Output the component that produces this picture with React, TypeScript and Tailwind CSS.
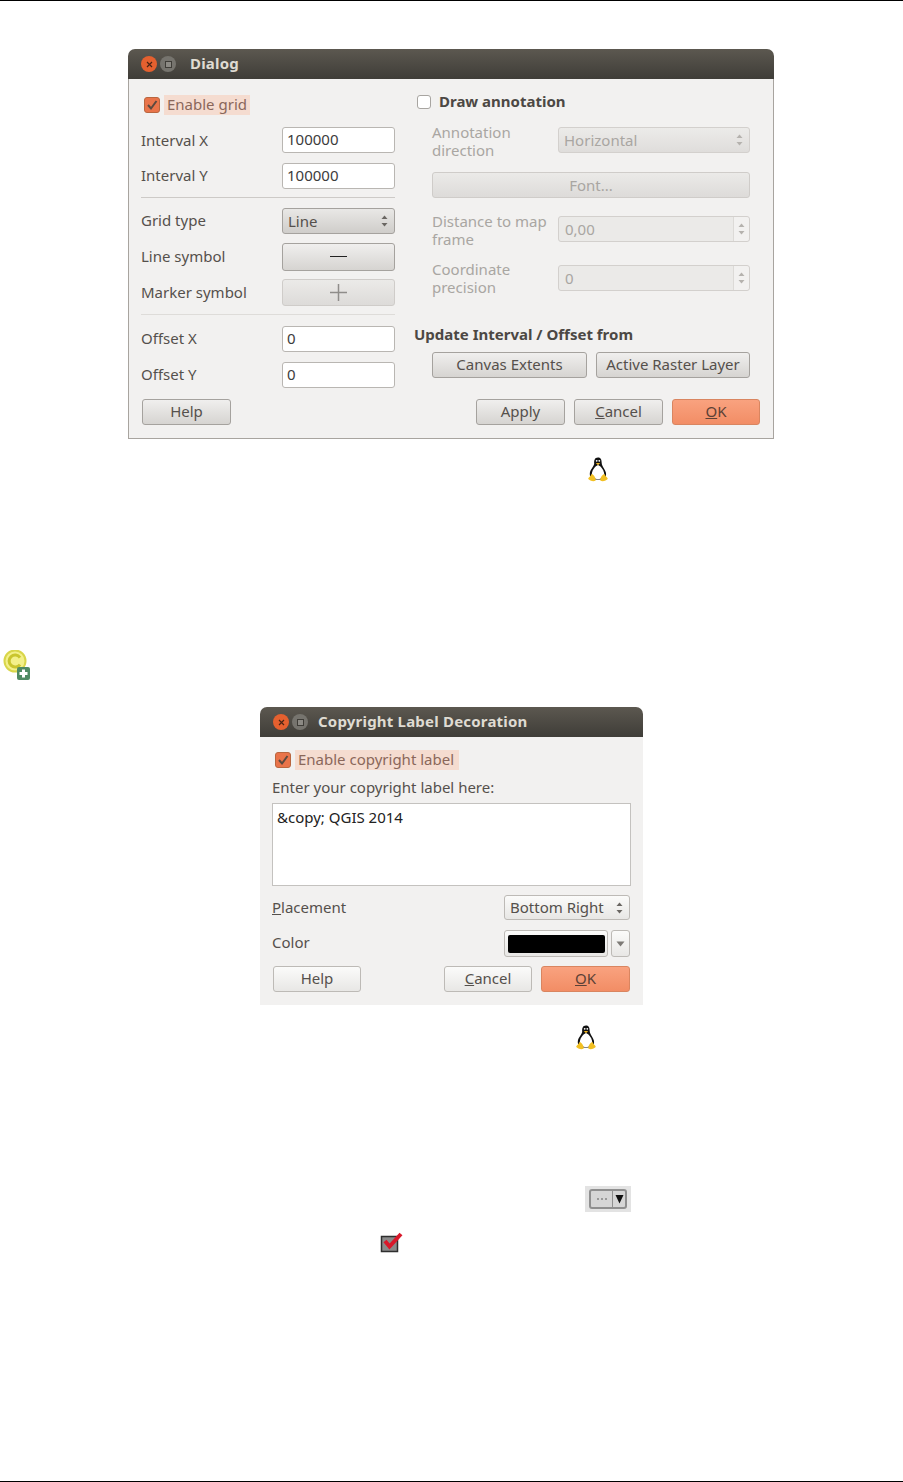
import type { ReactNode } from "react";

function Arrows({ dim }: { dim?: boolean }) {
  const fill = dim ? "#b5b2ae" : "#6a6662";
  return (
    <svg width="7" height="12" viewBox="0 0 7 12" className="shrink-0">
      <path d="M3.5 0.5 L6.5 4 H0.5 Z" fill={fill} />
      <path d="M0.5 8 H6.5 L3.5 11.5 Z" fill={fill} />
    </svg>
  );
}

function TitleBar({ title, gap }: { title: string; gap: string }) {
  return (
    <div className="h-[30px] flex items-center pl-[13px] rounded-t-[7px] bg-gradient-to-b from-[#5c5850] to-[#3f3d38]">
      <div className="w-[16px] h-[16px] rounded-full bg-[#e4602f] flex items-center justify-center">
        <svg width="7" height="7" viewBox="0 0 7 7">
          <path d="M1 1 L6 6 M6 1 L1 6" stroke="#4a2414" strokeWidth="1.2" />
        </svg>
      </div>
      <div className="w-[16px] h-[16px] ml-[3px] rounded-full bg-[#76746e] flex items-center justify-center">
        <div className="w-[7px] h-[7px] border border-[#3f3d38] bg-[#8c8a84]" />
      </div>
      <div className={`${gap} pb-[2px] text-[15px] font-bold tracking-[0.2px] text-[#dfdbd2]`}>{title}</div>
    </div>
  );
}

function Check({ label, bgWidth }: { label: string; bgWidth: string }) {
  return (
    <div className="flex items-center h-[20px]">
      <div className="w-[16px] h-[16px] rounded-[3px] bg-[#e9744a] border border-[#b9663f] flex items-center justify-center">
        <svg width="12" height="12" viewBox="0 0 12 12">
          <path d="M2 6 L5 9.5 L10.5 2" stroke="#5b4a40" strokeWidth="2" fill="none" />
        </svg>
      </div>
      <div className={`${bgWidth} ml-[4px] h-[20px] pl-[3px] bg-[#f5dcd0] text-[#8a675a] leading-[19px]`}>{label}</div>
    </div>
  );
}

function Input({ value }: { value: string }) {
  return (
    <div className="w-[113px] h-[26px] pl-[4px] rounded-[3px] bg-white border border-[#b9b6b2] text-[#3c3c3c] leading-[23px]">
      {value}
    </div>
  );
}

function Btn({ children, w, h = "h-[26px]", dim, ok, light }: { children: ReactNode; w: string; h?: string; dim?: boolean; ok?: boolean; light?: boolean }) {
  let look = "pb-[2px] bg-gradient-to-b from-[#f0efee] to-[#d6d4d1] border-[#a5a29e] text-[#55504c]";
  if (dim) look = "bg-gradient-to-b from-[#ebeae8] to-[#dddbd9] border-[#cfccc9] text-[#a9a6a2]";
  if (light) look = "pb-[2px] bg-gradient-to-b from-[#fbfbfa] to-[#e8e7e5] border-[#bdbab6] text-[#55504c]";
  if (ok) look = "pb-[2px] bg-gradient-to-b from-[#f9a27f] to-[#f28d65] border-[#d98560] text-[#5c4136]";
  return <div className={`${w} ${h} ${look} shrink-0 rounded-[3px] border flex items-center justify-center`}>{children}</div>;
}

function Row({ label, children, mt, flat }: { label: string; children: ReactNode; mt: string; flat?: boolean }) {
  return (
    <div className={`${mt} flex items-center justify-between text-[#55504c]`}>
      <span className={flat ? "" : "pb-[2px]"}>{label}</span>
      {children}
    </div>
  );
}

function Spin({ value }: { value: string }) {
  return (
    <div className="w-[192px] h-[26px] flex rounded-[3px] bg-[#ebeae8] border border-[#d3d0cd] text-[#a9a6a2]">
      <div className="flex-1 pl-[6px] leading-[24px]">{value}</div>
      <div className="w-[16px] border-l border-[#dcdad7] bg-[#f2f1f0] flex items-center justify-center rounded-r-[3px]">
        <Arrows dim />
      </div>
    </div>
  );
}

function DimRow({ lines, mt, down, children }: { lines: string[]; mt: string; down?: boolean; children: ReactNode }) {
  return (
    <div className={`${mt} flex items-center justify-between pl-[18px] h-[26px] text-[#a9a6a2]`}>
      <div className={down ? "pt-[2px] leading-[18px]" : "leading-[18px]"}>
        {lines.map((l) => (
          <div key={l}>{l}</div>
        ))}
      </div>
      {children}
    </div>
  );
}

function Tux() {
  return (
    <svg width="20" height="25" viewBox="0 0 20 25">
      <path d="M10 0.5 C6.6 0.5 6 3.5 6.2 6.5 C6.3 9 2 12.5 1.8 16.5 C1.7 19 3 22 5 22.5 L15 22.5 C17.5 21.5 18.4 18.5 18 16 C17.4 12.5 13.8 9.5 13.7 6 C13.6 3 13.2 0.5 10 0.5 Z" fill="#111" />
      <path d="M10 8 C6.5 9.5 3.8 14 3.8 17.3 C3.8 20.5 6.5 22 10 22 C13.5 22 16.2 20.5 16.2 17.3 C16.2 14 13.5 9.5 10 8 Z" fill="#fff" />
      <path d="M7.8 6 H12.2 L10 8.2 Z" fill="#eeb420" />
      <circle cx="8.7" cy="3.8" r="0.9" fill="#fff" />
      <circle cx="11.3" cy="3.8" r="0.9" fill="#fff" />
      <path d="M3.5 17 C2.5 20 0 20.5 0.3 22 C1.5 23.5 5 25 7.5 23.8 C8.2 21.5 6 17.5 3.5 17 Z" fill="#f2c023" />
      <path d="M16.5 17 C17.5 20 20 20.5 19.7 22 C18.5 23.5 15 25 12.5 23.8 C11.8 21.5 14 17.5 16.5 17 Z" fill="#f2c023" />
    </svg>
  );
}

function CopyrightPlus() {
  return (
    <svg width="28" height="30" viewBox="0 0 28 30">
      <circle cx="12" cy="11" r="10.5" fill="#f3f08a" stroke="#d9d64a" strokeWidth="2" />
      <path d="M17 7.5 A6 6 0 1 0 17 14.5" fill="none" stroke="#c9c52e" strokeWidth="3" />
      <rect x="14" y="17" width="13" height="13" rx="2" fill="#4f8a63" />
      <path d="M20.5 19.5 V27.5 M16.5 23.5 H24.5" stroke="#fff" strokeWidth="3" />
    </svg>
  );
}

function ToolButton() {
  return (
    <div className="ml-[585px] mt-[136px] w-[46px] h-[26px] bg-[#e3e3e3] flex items-center pl-[4px]">
      <div className="w-[38px] h-[20px] flex border-2 border-[#8f8f8f] rounded-[3px] bg-[#d6d6d6]">
        <div className="flex-1 flex items-center justify-center gap-[2px]">
          <span className="w-[2px] h-[2px] bg-[#9a9a9a]" />
          <span className="w-[2px] h-[2px] bg-[#9a9a9a]" />
          <span className="w-[2px] h-[2px] bg-[#9a9a9a]" />
        </div>
        <div className="w-[13px] border-l border-[#8f8f8f] flex items-center justify-center">
          <svg width="9" height="10" viewBox="0 0 9 10">
            <path d="M0.5 1 H8.5 L4.5 9.5 Z" fill="#111" />
          </svg>
        </div>
      </div>
    </div>
  );
}

function RedCheck() {
  return (
    <svg width="23" height="22" viewBox="0 0 23 22" className="ml-[380px] mt-[19px]">
      <rect x="1.5" y="5.5" width="16" height="15" fill="#8a8a8a" stroke="#2e2e2e" strokeWidth="1.5" />
      <path d="M5 10 L9.5 15.5 L21 3" fill="none" stroke="#d9182a" strokeWidth="4" />
    </svg>
  );
}

function GridDialog() {
  return (
    <div className="mt-[48px] ml-[128px] w-[646px] h-[390px]">
      <TitleBar title="Dialog" gap="ml-[14px]" />
      <div className="h-[360px] bg-[#f2f1f0] border border-t-0 border-[#a8a49f] px-[12px] pt-[16px]">
        <div className="flex h-[293px]">
          <div className="w-[254px] shrink-0">
            <div className="ml-[3px]">
              <Check label="Enable grid" bgWidth="w-[86px]" />
            </div>
            <Row label="Interval X" mt="mt-[12px]" flat><Input value="100000" /></Row>
            <Row label="Interval Y" mt="mt-[10px]"><Input value="100000" /></Row>
            <div className="mt-[8px] h-px bg-[#cdcac7]" />
            <Row label="Grid type" mt="mt-[10px]">
              <div className="w-[113px] h-[26px] pl-[5px] pr-[6px] rounded-[3px] border border-[#a5a29e] bg-gradient-to-b from-[#e9e8e6] to-[#cfcdca] flex items-center justify-between">
                Line
                <Arrows />
              </div>
            </Row>
            <Row label="Line symbol" mt="mt-[9px]">
              <Btn w="w-[113px]" h="h-[28px]"><span className="w-[17px] h-px bg-[#222]" /></Btn>
            </Row>
            <Row label="Marker symbol" mt="mt-[8px]" flat>
              <Btn w="w-[113px]" h="h-[27px]" dim>
                <svg width="17" height="17" viewBox="0 0 17 17">
                  <path d="M8.5 0 V17 M0 8.5 H17" stroke="#8f8d8a" strokeWidth="1.5" />
                </svg>
              </Btn>
            </Row>
            <div className="mt-[8px] h-px bg-[#dedcd9]" />
            <Row label="Offset X" mt="mt-[11px]"><Input value="0" /></Row>
            <Row label="Offset Y" mt="mt-[10px]"><Input value="0" /></Row>
          </div>
          <div className="ml-[19px] w-[336px] shrink-0">
            <div className="flex items-center h-[14px] ml-[3px]">
              <div className="w-[14px] h-[14px] rounded-[3px] bg-white border border-[#a8a5a1]" />
              <span className="ml-[8px] pb-[2px] font-bold text-[#4c4844]">Draw annotation</span>
            </div>
            <DimRow lines={["Annotation", "direction"]} mt="mt-[18px]" down>
              <div className="w-[192px] h-[26px] pl-[5px] pr-[6px] rounded-[3px] border border-[#d3d0cd] bg-gradient-to-b from-[#ecebe9] to-[#dfdddb] flex items-center justify-between">
                Horizontal
                <Arrows dim />
              </div>
            </DimRow>
            <div className="mt-[19px] ml-[18px]">
              <Btn w="w-[318px]" dim>Font...</Btn>
            </div>
            <DimRow lines={["Distance to map", "frame"]} mt="mt-[18px]" down><Spin value="0,00" /></DimRow>
            <DimRow lines={["Coordinate", "precision"]} mt="mt-[23px]"><Spin value="0" /></DimRow>
            <div className="mt-[33px] h-[20px] leading-[20px] font-bold text-[#4c4844]">Update Interval / Offset from</div>
            <div className="mt-[8px] ml-[18px] flex gap-[9px]">
              <Btn w="w-[155px]">Canvas Extents</Btn>
              <Btn w="w-[154px]">Active Raster Layer</Btn>
            </div>
          </div>
        </div>
        <div className="mt-[11px] ml-[1px] mr-[1px] flex gap-[9px]">
          <Btn w="w-[89px]">Help</Btn>
          <div className="flex-1" />
          <Btn w="w-[89px]">Apply</Btn>
          <Btn w="w-[89px]"><span><u>C</u>ancel</span></Btn>
          <Btn w="w-[88px]" ok><span><u>O</u>K</span></Btn>
        </div>
      </div>
    </div>
  );
}

function CopyrightDialog() {
  return (
    <div className="mt-[27px] ml-[260px] w-[383px] h-[298px]">
      <TitleBar title="Copyright Label Decoration" gap="ml-[10px]" />
      <div className="h-[268px] bg-[#f2f1f0] px-[12px] pt-[13px]">
        <div className="ml-[3px]">
          <Check label="Enable copyright label" bgWidth="w-[164px]" />
        </div>
        <div className="mt-[8px] h-[20px] leading-[18px] text-[#55504c]">Enter your copyright label here:</div>
        <div className="mt-[5px] w-[359px] h-[83px] bg-white border border-[#c4c2bf] pl-[4px] pt-[3px] text-[#222] leading-[20px]">
          &amp;copy; QGIS 2014
        </div>
        <div className="mt-[9px] flex items-center justify-between w-[358px] text-[#55504c]">
          <span><u>P</u>lacement</span>
          <div className="w-[126px] h-[25px] pl-[5px] pr-[6px] rounded-[3px] border border-[#bdbab6] bg-gradient-to-b from-[#fbfbfa] to-[#e8e7e5] flex items-center justify-between">
            Bottom Right
            <Arrows />
          </div>
        </div>
        <div className="mt-[10px] flex items-center justify-between w-[358px] text-[#55504c]">
          <span className="pb-[2px]">Color</span>
          <div className="flex gap-[3px]">
            <div className="w-[104px] h-[27px] rounded-[3px] border border-[#bdbab6] bg-gradient-to-b from-[#fbfbfa] to-[#e8e7e5] flex items-center justify-center">
              <div className="w-[97px] h-[18px] rounded-[2px] bg-black" />
            </div>
            <div className="w-[19px] h-[27px] rounded-[3px] border border-[#bdbab6] bg-gradient-to-b from-[#fbfbfa] to-[#e8e7e5] flex items-center justify-center">
              <svg width="9" height="6" viewBox="0 0 9 6"><path d="M0.5 0.5 H8.5 L4.5 5.5 Z" fill="#7d7a76" /></svg>
            </div>
          </div>
        </div>
        <div className="mt-[9px] ml-[1px] w-[357px] flex gap-[9px]">
          <Btn w="w-[88px]" light>Help</Btn>
          <div className="flex-1" />
          <Btn w="w-[88px]" light><span><u>C</u>ancel</span></Btn>
          <Btn w="w-[89px]" ok><span><u>O</u>K</span></Btn>
        </div>
      </div>
    </div>
  );
}

export default function App() {
  return (
    <div className="w-[903px] h-[1482px] flex flex-col bg-white font-['Noto_Sans',sans-serif] text-[15px]">
      <div className="h-px bg-black shrink-0" />
      <GridDialog />
      <div className="ml-[588px] mt-[18px] h-[25px]"><Tux /></div>
      <div className="ml-[3px] mt-[168px] h-[30px]"><CopyrightPlus /></div>
      <CopyrightDialog />
      <div className="ml-[576px] mt-[20px] h-[25px]"><Tux /></div>
      <ToolButton />
      <RedCheck />
      <div className="mt-auto h-px bg-black shrink-0" />
    </div>
  );
}
